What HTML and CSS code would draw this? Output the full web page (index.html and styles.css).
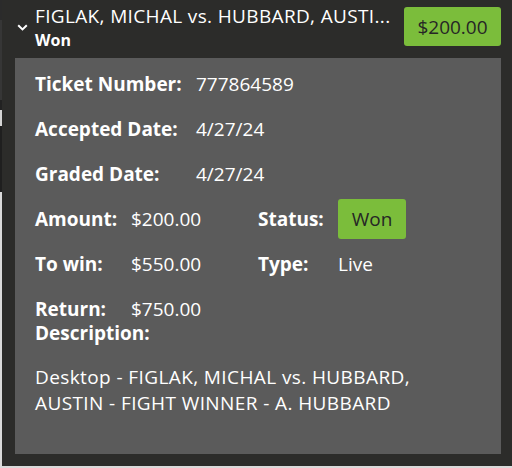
FILE: index.html
```html
<!DOCTYPE html>
<html>
<head>
<meta charset="utf-8">
<link rel="stylesheet" href="styles.css">
</head>
<body>
<div class="card">
  <div class="header">
    <svg class="chevron" width="11" height="7" viewBox="0 0 11 7"><path d="M1.2 1.2 L5.5 5.4 L9.8 1.2" fill="none" stroke="#fff" stroke-width="2"/></svg>
    <div class="titles">
      <div class="title">FIGLAK, MICHAL vs. HUBBARD, AUSTI...</div>
      <div class="subtitle">Won</div>
    </div>
    <div class="amount-btn">$200.00</div>
  </div>
  <div class="panel">
    <div class="row"><span class="label w-long">Ticket Number:</span><span class="value">777864589</span></div>
    <div class="row"><span class="label w-long">Accepted Date:</span><span class="value">4/27/24</span></div>
    <div class="row"><span class="label w-long">Graded Date:</span><span class="value">4/27/24</span></div>
    <div class="row">
      <div class="half"><span class="label w-short">Amount:</span><span class="value">$200.00</span></div>
      <div class="half"><span class="label w-status">Status:</span><span class="badge">Won</span></div>
    </div>
    <div class="row">
      <div class="half"><span class="label w-short">To win:</span><span class="value">$550.00</span></div>
      <div class="half"><span class="label w-status">Type:</span><span class="value">Live</span></div>
    </div>
    <div class="row tight"><span class="label w-short">Return:</span><span class="value">$750.00</span></div>
    <div class="row"><span class="label">Description:</span></div>
    <div class="desc">Desktop - FIGLAK, MICHAL vs. HUBBARD, AUSTIN - FIGHT WINNER - A. HUBBARD</div>
  </div>
</div>
</body>
</html>
```
FILE: styles.css
```css
html, body {
  margin: 0;
  padding: 0;
}
body {
  width: 512px;
  height: 468px;
  font-family: "Open Sans", "Noto Sans", sans-serif;
  color: #fff;
  background: linear-gradient(to bottom, #2b2b2b 0, #2b2b2b 20px, #363636 20px, #363636 100px, #222 100px, #222 110px, #d4d4d4 110px, #d4d4d4 126px, #1f1f1f 126px, #1f1f1f 192px, #dadada 192px, #dadada 468px);
  overflow: hidden;
}
.card {
  margin-left: 2px;
  width: 510px;
  height: 466px;
  background: #2c2c2a;
  display: flex;
  flex-direction: column;
}
.header {
  height: 58px;
  display: flex;
  align-items: flex-start;
}
.chevron {
  margin: 24px 0 0 15px;
  flex: none;
}
.titles {
  margin-left: 7px;
  flex: 1;
  min-width: 0;
}
.title {
  font-size: 19px;
  line-height: 24px;
  letter-spacing: 0.35px;
  margin-top: 4px;
  white-space: nowrap;
}
.subtitle {
  font-size: 16px;
  font-weight: 700;
  line-height: 20px;
  margin-top: 2px;
}
.amount-btn {
  margin: 7px 11px 0 0;
  width: 97px;
  height: 39px;
  background: #7bbd3b;
  border-radius: 3px;
  color: #262626;
  font-size: 19px;
  display: flex;
  align-items: center;
  justify-content: center;
  flex: none;
}
.panel {
  margin: 0 11px 12px 13px;
  flex: 1;
  background: #5b5b5b;
  padding: 14px 20px 0 20px;
}
.row {
  display: flex;
  align-items: center;
  height: 24px;
  margin-bottom: 21px;
  font-size: 19px;
  line-height: 24px;
}
.row.tight {
  margin-bottom: 0;
}
.label {
  font-weight: 700;
}
.w-long { width: 161px; flex: none; }
.w-short { width: 96px; flex: none; }
.w-status { width: 80px; flex: none; }
.half {
  display: flex;
  align-items: center;
  width: 223px;
}
.badge {
  background: #7bbd3b;
  color: #262626;
  width: 68px;
  height: 40px;
  border-radius: 3px;
  display: flex;
  align-items: center;
  justify-content: center;
  font-size: 19px;
}
.desc {
  width: 430px;
  font-size: 19px;
  letter-spacing: 0.4px;
  line-height: 26px;
  margin-top: -2px;
}
```
